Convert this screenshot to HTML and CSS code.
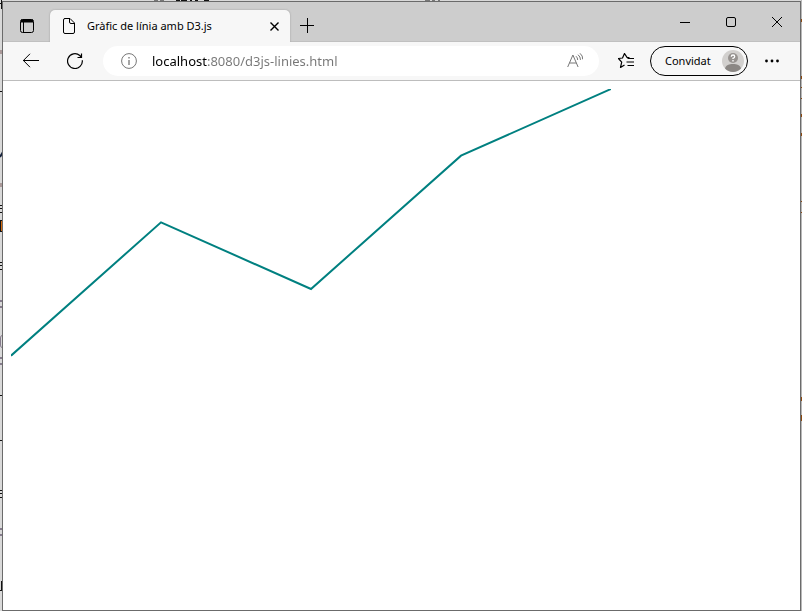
FILE: index.html
```html
<!DOCTYPE html>
<html lang="ca">
<head>
<meta charset="utf-8">
<title>Gràfic de línia amb D3.js</title>
<link rel="stylesheet" href="styles.css">
</head>
<body>
<svg class="backdrop backdrop-left" width="3" height="611" aria-hidden="true">
  <path stroke="#111" d="M0 3.5h2M1.500 0v9M0 91.500h3M0 205.500h3M0 208.500h3M0 212.500h3M0 220.500h3M0 231.500h3M.5 220v12M0 262.500h3M0 265.500h3M0 269.500h3M0 395.500h3M0 440.500h3M0 490.500h3M0 493.500h3M0 497.500h3M0 590.500h3M1.500 581v10"/>
  <path stroke="#14213c" stroke-width="2" d="M0 157l3-5"/>
  <path stroke="#d46a10" d="M1.500 221v10"/>
  <path stroke="#a99" stroke-width="4" d="M0 52h2M0 185h2"/>
  <path stroke="#857b8c" stroke-width="2" d="M0 301h2M0 307h2M0 358h2M0 364h2M0 529h2M0 535h2"/>
  <path stroke="#857b8c" d="M2 335.500Q.5 335.500.5 338v7q0 2.500 1.500 2.500"/>
</svg>
<svg class="backdrop backdrop-right" width="1" height="611" aria-hidden="true">
  <path stroke="#8a4810" d="M.5 19v3M.5 76v3M.5 87v1M.5 98v1M.5 114v3M.5 133v3M.5 201v1M.5 212v1M.5 397v4M.5 415v6"/>
</svg>
<svg class="backdrop backdrop-top" width="450" height="1" aria-hidden="true">
  <path stroke="#777" d="M154 .5h4M160 .5h4M425 .5h5M432 .5h3M438 .5h2"/>
  <path stroke="#111" d="M176 .5h4M181 .5h6M190 .5h2M195 .5h3M204 .5h5"/>
</svg>
<div class="window">
  <header class="titlebar">
    <button class="workspace-button" type="button" aria-label="Menú d'accions de pestanya">
      <svg class="icon" viewBox="0 0 16 16"><rect x="1.500" y="1.500" width="13" height="13" rx="2"/><path d="M2 3h12" stroke-width="3"/><path d="M4.500 4v10" stroke-width="1"/></svg>
    </button>
    <div class="tab">
      <svg class="icon" viewBox="0 0 16 16"><path d="M3.500.5h5.500l4.500 4.500v9q0 1.500-1.500 1.500H4q-1.500 0-1.500-1.500V2Q2.500.5 4 .5M8.500.5V4q0 1.500 1.500 1.500h3.500"/></svg>
      <span class="tab-title">Gràfic de línia amb D3.js</span>
      <button class="tab-close" type="button" aria-label="Tanca la pestanya">
        <svg class="icon" viewBox="0 0 16 16"><path d="M4.500 4.500l8 8M12.500 4.500l-8 8" stroke-width="1.400"/></svg>
      </button>
    </div>
    <button class="new-tab" type="button" aria-label="Pestanya nova">
      <svg class="icon" viewBox="0 0 16 16"><path d="M1 7.500h14M8.500 0v15"/></svg>
    </button>
    <div class="window-controls">
      <button type="button" aria-label="Minimitza"><svg class="icon" viewBox="0 0 16 16"><path d="M3 8.500h10"/></svg></button>
      <button type="button" aria-label="Maximitza"><svg class="icon" viewBox="0 0 16 16"><rect x="3.500" y="3.500" width="9" height="9" rx="1.500"/></svg></button>
      <button type="button" aria-label="Tanca"><svg class="icon" viewBox="0 0 16 16"><path d="M3 3l10 10M13 3L3 13"/></svg></button>
    </div>
  </header>
  <nav class="toolbar">
    <button class="tool" type="button" aria-label="Enrere">
      <svg class="icon" viewBox="0 0 16 16"><path d="M0 7.500h16M7 .8L.4 7.500 7 14.200"/></svg>
    </button>
    <button class="tool" type="button" aria-label="Actualitza">
      <svg class="icon" viewBox="0 0 16 16"><path d="M15.300 7.200A7.400 7.400 0 1 1 12.800 2.500L14.500 4.500M14.500.5v4h-4" stroke-width="1.200"/></svg>
    </button>
    <div class="address">
      <svg class="icon muted" viewBox="0 0 16 16"><circle cx="8" cy="8" r="7.400"/><path d="M8 7v5M8 4v1.500" stroke-width="1.300"/></svg>
      <input class="url" type="text" aria-label="Adreça" value="localhost:8080/d3js-linies.html" spellcheck="false">
      <svg class="icon muted" viewBox="0 0 16 16"><path d="M.7 14L5.900 2l5.200 12M2.500 10h6.800M9 3.200q1.700 1.500 1.700 3.800M11 1.700q2.500 2 2.500 5.200M13 .3q3 2.500 2.700 6"/></svg>
    </div>
    <button class="tool" type="button" aria-label="Preferits">
      <svg class="icon" viewBox="0 0 16 16"><path d="M11.500 4.500L9 4.300 6.500.5 4.500 5 .5 5.500l3.200 3.700L2.500 14.500l4-2.500M9.500 5.500H16M8.500 9H16M9.500 12.500H16" stroke-width="1.200" stroke-linejoin="round"/></svg>
    </button>
    <button class="profile" type="button">
      <span>Convidat</span>
      <svg class="avatar" viewBox="0 0 22 22"><circle cx="11" cy="11" r="11" fill="#d2d0ce"/><path d="M3 18.500C4 15 7 14 11 14s7 1 8 4.500A11 11 0 0 1 3 18.500z" fill="#8b8784"/><circle cx="11" cy="8" r="5" fill="#979390"/><path d="M9.300 6.800q0-1.800 1.700-1.800t1.700 1.500Q12.700 7.700 11 8.300v.8M11 10v1.500" fill="none" stroke="#fff" stroke-width="1.300"/></svg>
    </button>
    <button class="tool" type="button" aria-label="Configuració i més">
      <svg class="icon solid" viewBox="0 0 16 16"><circle cx="2.500" cy="8" r="1.400"/><circle cx="8" cy="8" r="1.400"/><circle cx="13.500" cy="8" r="1.400"/></svg>
    </button>
  </nav>
  <main class="page">
    <svg class="chart" width="600" height="400" role="img" aria-label="Gràfic de línia">
      <path d="M0 266.667L150 133.333L300 200L450 66.667L600 0"/>
    </svg>
  </main>
</div>
</body>
</html>
```
FILE: styles.css
```css
* {
  box-sizing: border-box;
}

body {
  display: flex;
  min-height: 100vh;
  margin: 0;
  padding: 1px 1px 0 2px;
  background: #d9d9d9;
  font: 12px/16px "Noto Sans", "Open Sans", sans-serif;
  color: #000;
}

.backdrop {
  position: absolute;
  top: 0;
  fill: none;
}

.backdrop-left,
.backdrop-top {
  left: 0;
}

.backdrop-right {
  right: 0;
  background: #b8b8b8;
}

button {
  display: flex;
  align-items: center;
  justify-content: center;
  margin: 0;
  padding: 0;
  border: 0;
  background: none;
  color: inherit;
  font: inherit;
}

.icon {
  flex: none;
  width: 16px;
  height: 16px;
  fill: none;
  stroke: currentColor;
}

.solid {
  fill: currentColor;
  stroke: none;
}

.muted {
  color: #767676;
}

.window {
  position: relative;
  display: flex;
  flex: 1;
  flex-direction: column;
  min-width: 0;
  border: 1px solid #6b6b6b;
  background: #fff;
}

.titlebar {
  display: flex;
  align-items: stretch;
  height: 40px;
  background: #cdcdcd;
  box-shadow: inset 0 -1px #c0c0c0;
}

.workspace-button {
  width: 47px;
  padding-top: 8px;
}

.tab {
  display: flex;
  align-items: center;
  gap: 10px;
  width: 240px;
  margin-top: 8px;
  padding: 0 8px 0 11px;
  border-radius: 5px 5px 0 0;
  background: #f7f7f7;
  box-shadow: 0 0 2px #999;
  clip-path: inset(-2px -2px 0);
}

.tab-title {
  flex: 1;
  font-size: 11px;
  white-space: nowrap;
}

.new-tab {
  width: 34px;
  padding-top: 8px;
}

.window-controls {
  display: flex;
  margin-left: auto;
}

.window-controls button {
  width: 46px;
}

.toolbar {
  display: flex;
  align-items: center;
  height: 39px;
  padding: 0 6px;
  border-bottom: 1px solid #bdbdbd;
  background: #f7f7f7;
}

.tool {
  flex: none;
  width: 44px;
  height: 30px;
}

.address {
  display: flex;
  flex: 1;
  align-items: center;
  gap: 15px;
  min-width: 0;
  height: 30px;
  margin: 0 5px 0 6px;
  padding: 0 16px 0 18px;
  border-radius: 15px;
  background: #fff;
}

.url {
  flex: 1;
  min-width: 0;
  padding: 0;
  border: 0;
  outline: 0;
  background: linear-gradient(90deg, #000 56px, #767676 56px);
  background-clip: text;
  color: transparent;
  font: 13px/18px "Noto Sans", "Open Sans", sans-serif;
}

.profile {
  flex: none;
  justify-content: space-between;
  width: 98px;
  height: 30px;
  margin: 0 2px;
  padding: 0 3px 0 14px;
  border: 1px solid #000;
  border-radius: 15px;
  font-size: 11px;
}

.avatar {
  width: 22px;
  height: 22px;
}

.page {
  flex: 1;
  padding: 8px;
}

.chart {
  display: block;
}

.chart path {
  fill: none;
  stroke: teal;
  stroke-width: 2;
}
```
